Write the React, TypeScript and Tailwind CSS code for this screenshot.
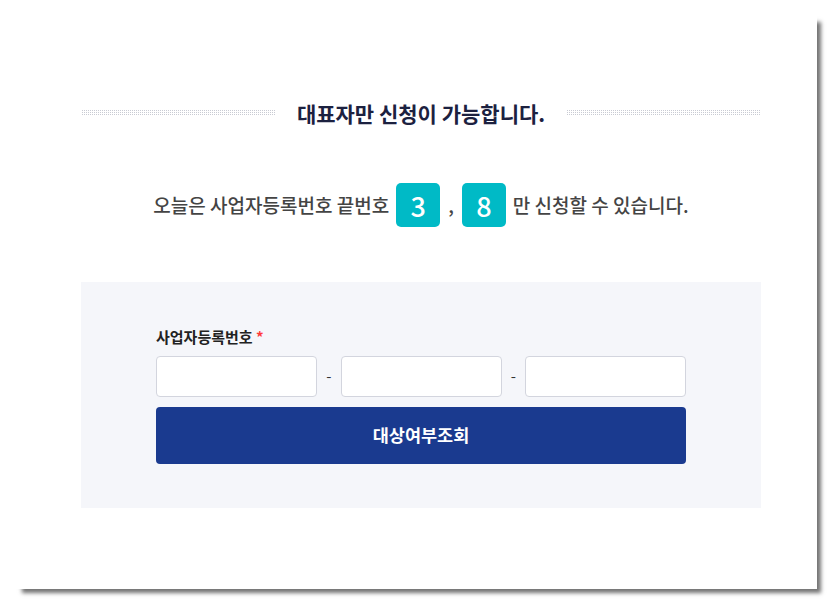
import React from "react";

const font = { fontFamily: '"Noto Sans CJK KR", "Noto Sans", sans-serif' };

function Dotted() {
  return (
    <div className="flex-1 h-[6px] bg-[conic-gradient(#c9cbd3_25%,transparent_0)] bg-[length:2px_2px]" />
  );
}

function Badge({ n }: { n: string }) {
  return (
    <div className="w-[44px] h-[44px] rounded-[5px] bg-[#00bac6] text-white text-[27px] font-medium flex items-center justify-center leading-none">
      {n}
    </div>
  );
}

export default function App() {
  return (
    <div className="w-[837px] h-[609px] bg-white" style={font}>
      <div className="w-[817px] h-[589px] bg-white shadow-[13px_13px_4px_-9px_rgba(0,0,0,0.55)]">
        <div className="ml-[81px] w-[680px] pt-[99px] flex flex-col">
          <div className="flex items-center gap-[21px] h-[28px]">
            <Dotted />
            <div className="text-[21px] font-bold text-[#1c2140] leading-[28px]">
              대표자만 신청이 가능합니다.
            </div>
            <Dotted />
          </div>

          <div className="mt-[56px] flex items-center justify-center gap-[7px] text-[19px] text-[#444444] font-medium">
            <span>오늘은 사업자등록번호 끝번호</span>
            <Badge n="3" />
            <span className="px-[1px]">,</span>
            <Badge n="8" />
            <span>만 신청할 수 있습니다.</span>
          </div>

          <div className="mt-[55px] bg-[#f5f6fa] h-[226px] pt-[44px] pl-[75px]">
            <div className="w-[530px] flex flex-col">
              <div className="text-[15px] font-bold text-[#222222] leading-[22px] h-[22px]">
                사업자등록번호 <span className="text-[#ff3b3b]">*</span>
              </div>
              <div className="mt-[8px] flex items-center">
                <input className="w-[161px] h-[41px] bg-white border border-[#d3d5de] rounded-[4px] outline-none" />
                <span className="w-[24px] text-center text-[15px] text-[#333]">-</span>
                <input className="w-[161px] h-[41px] bg-white border border-[#d3d5de] rounded-[4px] outline-none" />
                <span className="w-[24px] text-center text-[15px] text-[#333]">-</span>
                <input className="w-[161px] h-[41px] bg-white border border-[#d3d5de] rounded-[4px] outline-none" />
              </div>
              <button className="mt-[10px] h-[57px] w-[530px] rounded-[4px] bg-[#1a3a8f] text-white text-[17.5px] font-bold">
                대상여부조회
              </button>
            </div>
          </div>
        </div>
      </div>
    </div>
  );
}
